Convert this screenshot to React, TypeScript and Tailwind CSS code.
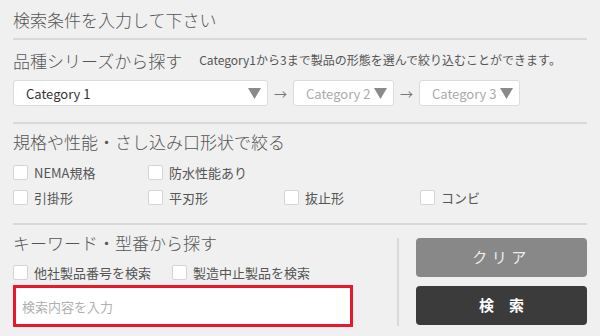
const font = { fontFamily: '"Noto Sans CJK JP", "Noto Sans", sans-serif' };

function Check({ label }: { label: string }) {
  return (
    <label className="flex items-center gap-[6px] h-[16px]">
      <span className="w-[15px] h-[15px] bg-white border border-[#d4d4d4] rounded-[2px] shrink-0" />
      <span className="text-[13px] leading-none text-[#555]">{label}</span>
    </label>
  );
}

function Select({ label, muted, w }: { label: string; muted?: boolean; w: string }) {
  return (
    <div
      className={`${w} h-[26px] bg-white border border-[#dcdcdc] rounded-[3px] flex items-center justify-between pl-[12px] pr-[6px]`}
    >
      <span className={`text-[13px] leading-none ${muted ? 'text-[#aaa]' : 'text-[#333]'}`}>{label}</span>
      <svg width="13" height="11" viewBox="0 0 13 11">
        <path d="M0 0H13L6.5 11Z" fill="#8a8a8a" />
      </svg>
    </div>
  );
}

function Arrow() {
  return <span className="text-[13px] text-[#777] w-[25px] text-center leading-none">→</span>;
}

export default function App() {
  return (
    <div className="w-[600px] h-[336px] bg-[#f0f0f0] px-[13px] pt-[7px] overflow-hidden" style={font}>
      <h1 className="h-[26px] leading-[26px] text-[17px] font-light text-[#555]">検索条件を入力して下さい</h1>
      <div className="mt-[5px] h-[2px] bg-[#d9d9d9]" />

      {/* 品種シリーズ */}
      <div className="mt-[7px] h-[26px] flex items-center gap-[17px]">
        <h2 className="text-[17px] font-light text-[#555] leading-none">品種シリーズから探す</h2>
        <p className="text-[12px] text-[#555] leading-none">Category1から3まで製品の形態を選んで絞り込むことができます。</p>
      </div>
      <div className="mt-[7px] flex items-center">
        <Select label="Category 1" w="w-[255px]" />
        <Arrow />
        <Select label="Category 2" muted w="w-[101px]" />
        <Arrow />
        <Select label="Category 3" muted w="w-[101px]" />
      </div>
      <div className="mt-[16px] h-[2px] bg-[#d9d9d9]" />

      {/* 規格 */}
      <h2 className="mt-[5px] h-[26px] leading-[26px] text-[17px] font-light text-[#555]">規格や性能・さし込み口形状で絞る</h2>
      <div className="mt-[9px] grid grid-cols-[135px_136px_136px_136px]">
        <Check label="NEMA規格" />
        <Check label="防水性能あり" />
      </div>
      <div className="mt-[9px] grid grid-cols-[135px_136px_136px_136px]">
        <Check label="引掛形" />
        <Check label="平刃形" />
        <Check label="抜止形" />
        <Check label="コンビ" />
      </div>
      <div className="mt-[18px] h-[2px] bg-[#d9d9d9]" />

      {/* キーワード */}
      <div className="flex">
        <div className="w-[340px]">
          <h2 className="mt-[5px] h-[26px] leading-[26px] text-[17px] font-light text-[#555]">キーワード・型番から探す</h2>
          <div className="mt-[8px] flex gap-[21px]">
            <Check label="他社製品番号を検索" />
            <Check label="製造中止製品を検索" />
          </div>
          <div className="mt-[5px] h-[42px] bg-white border-[3px] border-[#e8192c] flex items-center pl-[6px]">
            <span className="text-[13px] text-[#b0b0b0] leading-none">検索内容を入力</span>
          </div>
        </div>
        <div className="ml-[44px] mt-[13px] h-[88px] w-[2px] bg-[#d9d9d9]" />
        <div className="ml-[17px] flex-1 mt-[13px] flex flex-col gap-[9px]">
          <button className="h-[39px] rounded-[4px] bg-[#888] text-[#eee] text-[15px] tracking-[0.3em]">クリア</button>
          <button className="h-[39px] rounded-[4px] bg-[#3b3b3b] text-white text-[15px] font-bold">検　索</button>
        </div>
      </div>
    </div>
  );
}
